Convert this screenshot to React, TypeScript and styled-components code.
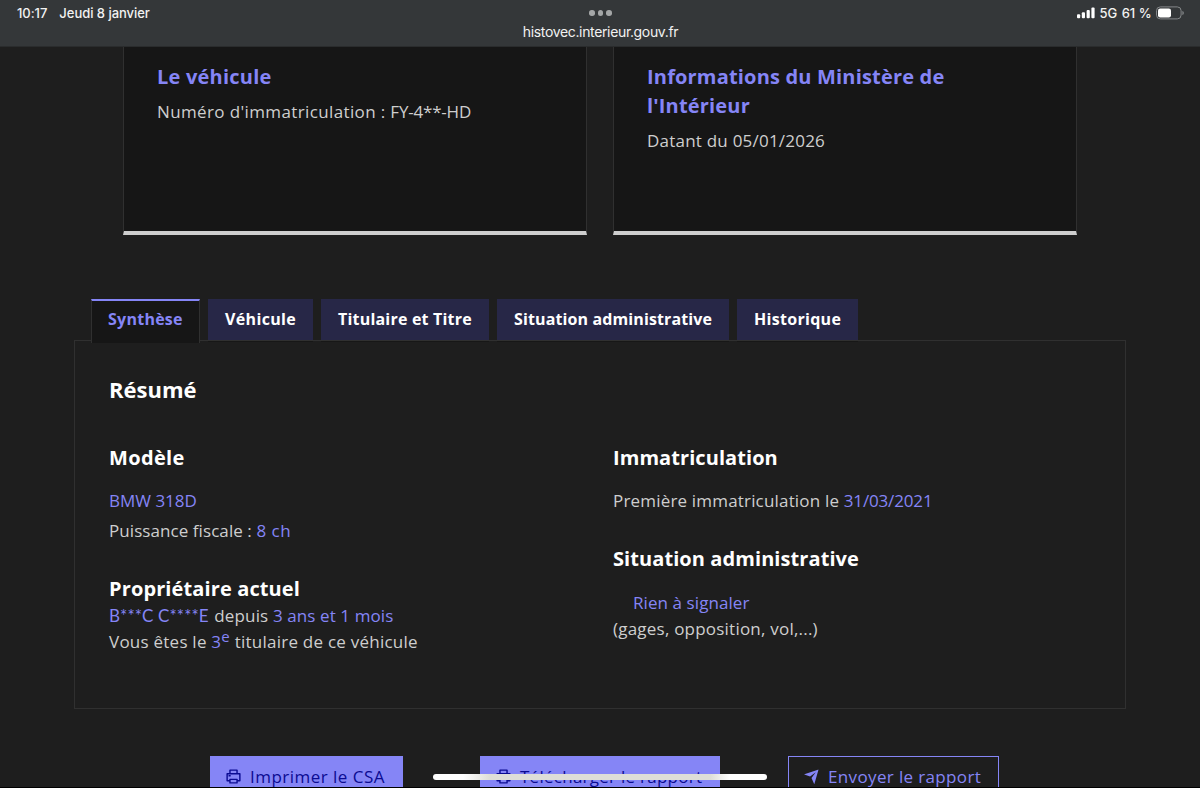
import React from 'react';
import styled, { createGlobalStyle, css } from 'styled-components';
import { RiPrinterLine, RiSendPlaneFill } from 'react-icons/ri';

const GlobalStyle = createGlobalStyle`
  * { box-sizing: border-box; }
  body { margin: 0; background: #1e1e1e; overflow: hidden; }
`;

const Screen = styled.div`
  position: relative;
  width: 1200px;
  height: 788px;
  overflow: hidden;
  display: flex;
  flex-direction: column;
  background: #1e1e1e;
  border-bottom: 1px solid #000;
  color: #cecece;
  font-family: 'Open Sans', 'Noto Sans', sans-serif;
  font-size: 17px;
  white-space: nowrap;
`;

const StatusBar = styled.header`
  flex: none;
  height: 47px;
  display: grid;
  grid-template-columns: 1fr auto 1fr;
  align-items: start;
  padding: 5px 16px 0 17px;
  background: #343739;
  border-bottom: 1px solid #2a2c2d;
  color: #f2f2f2;
  font: 500 13px/16px Inter, sans-serif;
`;

const Clock = styled.div`
  display: flex;
  gap: 12px;
  letter-spacing: -0.04px;
`;

const Address = styled.div`
  display: flex;
  flex-direction: column;
  align-items: center;
  gap: 6px;
  padding-top: 5px;
  font-weight: 400;
  font-size: 14px;
  line-height: 19px;
  letter-spacing: -0.35px;
`;

const Dots = styled.div`
  display: flex;
  gap: 3px;
  i { width: 5.5px; height: 5.5px; border-radius: 50%; background: #a4a6a7; }
`;

const Signals = styled.div`
  display: flex;
  justify-content: flex-end;
  gap: 4.4px;
  svg { display: block; margin-top: 1px; }
`;

const Cards = styled.section`
  flex: none;
  display: flex;
  gap: 26px;
  height: 188px;
  padding: 0 123px;
`;

const Card = styled.article`
  width: 464px;
  padding: 14.5px 33px 0;
  background: #161616;
  border: 1px solid #303030;
  border-top: 0;
  border-bottom: 4px solid #cecece;
`;

const CardTitle = styled.h3<{ $track: number }>`
  margin: 0 0 7.9px;
  color: #8585f6;
  font-size: 20px;
  font-weight: 700;
  line-height: 29.5px;
  letter-spacing: ${p => p.$track}px;
`;

const Text = styled.p<{ $track?: number; $line?: number; $gap?: number; $indent?: number }>`
  margin: ${p => p.$gap ?? 0}px 0 0 ${p => p.$indent ?? 0}px;
  line-height: ${p => p.$line ?? 26}px;
  letter-spacing: ${p => p.$track ?? 0.15}px;
`;

const Plate = styled.span`
  letter-spacing: -0.2px;
`;

const Value = styled.span<{ $track?: number }>`
  color: #8585f6;
  ${p => p.$track !== undefined && css`letter-spacing: ${p.$track}px;`}
`;

const MaskedName = styled(Value)`
  margin-right: 1px;
  font-family: Lato, 'Open Sans', sans-serif;
  letter-spacing: 0.1px;
`;

const Ordinal = styled.sup`
  font-size: 15px;
  line-height: 0;
  vertical-align: 6px;
`;

const TabList = styled.nav`
  flex: none;
  display: flex;
  gap: 8px;
  height: 41px;
  margin: 64px 74px 0;
  padding-left: 17px;
`;

const Tab = styled.div<{ $width: number; $track: number; $active?: boolean }>`
  width: ${p => p.$width}px;
  height: 41px;
  padding-left: 17px;
  background: #272747;
  box-shadow: 0 2px 0 #171717;
  color: #fff;
  font-size: 16px;
  font-weight: 700;
  line-height: 40px;
  letter-spacing: ${p => p.$track}px;
  ${p => p.$active && css`
    position: relative;
    z-index: 1;
    height: 44px;
    padding-left: 16px;
    background: #161616;
    border: 1px solid #303030;
    border-top: 2px solid #8585f6;
    border-bottom: 0;
    box-shadow: none;
    color: #8585f6;
    line-height: 36px;
  `}
`;

const Panel = styled.section`
  flex: none;
  height: 369px;
  margin: 0 74px;
  padding: 33px 34px 0;
  border: 1px solid #303030;
`;

const Heading = styled.h2<{ $track: number }>`
  margin: 0;
  color: #fff;
  font-size: 22px;
  font-weight: 700;
  line-height: 30px;
  letter-spacing: ${p => p.$track}px;
`;

const Columns = styled.div`
  display: grid;
  grid-template-columns: 504px 1fr;
  margin-top: 39px;
`;

const SubHeading = styled.h3<{ $track: number; $gap?: number }>`
  margin: ${p => p.$gap ?? 0}px 0 0;
  color: #fff;
  font-size: 20px;
  font-weight: 700;
  line-height: 30px;
  letter-spacing: ${p => p.$track}px;
`;

const Actions = styled.footer`
  flex: none;
  display: flex;
  margin-top: 47px;
  padding-left: 210px;
`;

const Action = styled.div<{ $width: number; $track: number; $after?: number; $outline?: boolean }>`
  display: flex;
  align-items: flex-start;
  gap: 8px;
  width: ${p => p.$width}px;
  height: 42px;
  margin-right: ${p => p.$after ?? 0}px;
  padding: 8px 0 0 15px;
  background: #8585f6;
  color: #0b0b92;
  font-weight: 500;
  line-height: 25px;
  letter-spacing: ${p => p.$track}px;
  svg { flex: none; width: 17px; height: 17px; margin-top: 4px; }
  ${p => p.$outline && css`
    padding: 7px 0 0 14px;
    border: 1px solid #8585f6;
    background: transparent;
    color: #8585f6;
  `}
`;

const HomeIndicator = styled.div`
  position: absolute;
  left: 433px;
  top: 774px;
  width: 334px;
  height: 6px;
  border-radius: 3px;
  background: linear-gradient(90deg, #fff 0, #fff 9%, #deded8 17%, #deded8 83%, #fff 89%, #fff 100%);
`;

export default function App() {
  return (
    <>
      <GlobalStyle />
      <Screen>
        <StatusBar>
          <Clock><span>10:17</span><span>Jeudi 8 janvier</span></Clock>
          <Address>
            <Dots><i /><i /><i /></Dots>
            <span>histovec.interieur.gouv.fr</span>
          </Address>
          <Signals>
            <svg width="18" height="14" viewBox="0 0 18 14" fill="#fff">
              <rect x="0" y="8.2" width="3.2" height="4" rx="1" />
              <rect x="4.8" y="6.3" width="3.2" height="5.9" rx="1" />
              <rect x="9.6" y="4" width="3.2" height="8.2" rx="1" />
              <rect x="14.4" y="1.5" width="3.2" height="10.7" rx="1" />
            </svg>
            <span>5G</span>
            <span>61 %</span>
            <svg width="28" height="14" viewBox="0 0 28 14">
              <rect x="0.5" y="0.9" width="24.6" height="12" rx="3.8" fill="none" stroke="#85888a" />
              <rect x="2" y="2.4" width="13" height="9" rx="2.2" fill="#fff" />
              <path d="M26.4 5v4c.9-.3 1.4-1.1 1.4-2s-.5-1.7-1.4-2z" fill="#85888a" />
            </svg>
          </Signals>
        </StatusBar>

        <Cards>
          <Card>
            <CardTitle $track={0.22}>Le véhicule</CardTitle>
            <Text $track={0.37}>Numéro d'immatriculation : <Plate>FY-4**-HD</Plate></Text>
          </Card>
          <Card>
            <CardTitle $track={0.18}>Informations du Ministère de<br />l'Intérieur</CardTitle>
            <Text $track={0.22}>Datant du 05/01/2026</Text>
          </Card>
        </Cards>

        <TabList>
          <Tab $width={109} $track={0.25} $active>Synthèse</Tab>
          <Tab $width={105} $track={0.35}>Véhicule</Tab>
          <Tab $width={168} $track={0.2}>Titulaire et Titre</Tab>
          <Tab $width={232} $track={0.12}>Situation administrative</Tab>
          <Tab $width={121} $track={0.3}>Historique</Tab>
        </TabList>

        <Panel>
          <Heading $track={0}>Résumé</Heading>
          <Columns>
            <div>
              <SubHeading $track={0.35}>Modèle</SubHeading>
              <Text $gap={15} $track={0}><Value>BMW 318D</Value></Text>
              <Text $gap={4} $track={0.07}>Puissance fiscale : <Value $track={0.5}>8 ch</Value></Text>
              <SubHeading $gap={30} $track={0.12}>Propriétaire actuel</SubHeading>
              <Text $gap={-1}><MaskedName>B***C C****E</MaskedName> depuis <Value $track={0.1}>3 ans et 1 mois</Value></Text>
              <Text $track={0.24}>Vous êtes le <Value>3<Ordinal>e</Ordinal></Value> titulaire de ce véhicule</Text>
            </div>
            <div>
              <SubHeading $track={0.07}>Immatriculation</SubHeading>
              <Text $gap={15} $track={0.18}>Première immatriculation le <Value $track={-0.15}>31/03/2021</Value></Text>
              <SubHeading $gap={30} $track={0.08}>Situation administrative</SubHeading>
              <Text $gap={16} $indent={20} $track={0.08}><Value>Rien à signaler</Value></Text>
              <Text $track={0.22}>(gages, opposition, vol,...)</Text>
            </div>
          </Columns>
        </Panel>

        <Actions>
          <Action $width={193} $after={77} $track={0.48}><RiPrinterLine />Imprimer le CSA</Action>
          <Action $width={240} $after={68} $track={0.26}><RiPrinterLine />Télécharger le rapport</Action>
          <Action $width={211} $track={0.36} $outline><RiSendPlaneFill />Envoyer le rapport</Action>
        </Actions>
        <HomeIndicator />
      </Screen>
    </>
  );
}
